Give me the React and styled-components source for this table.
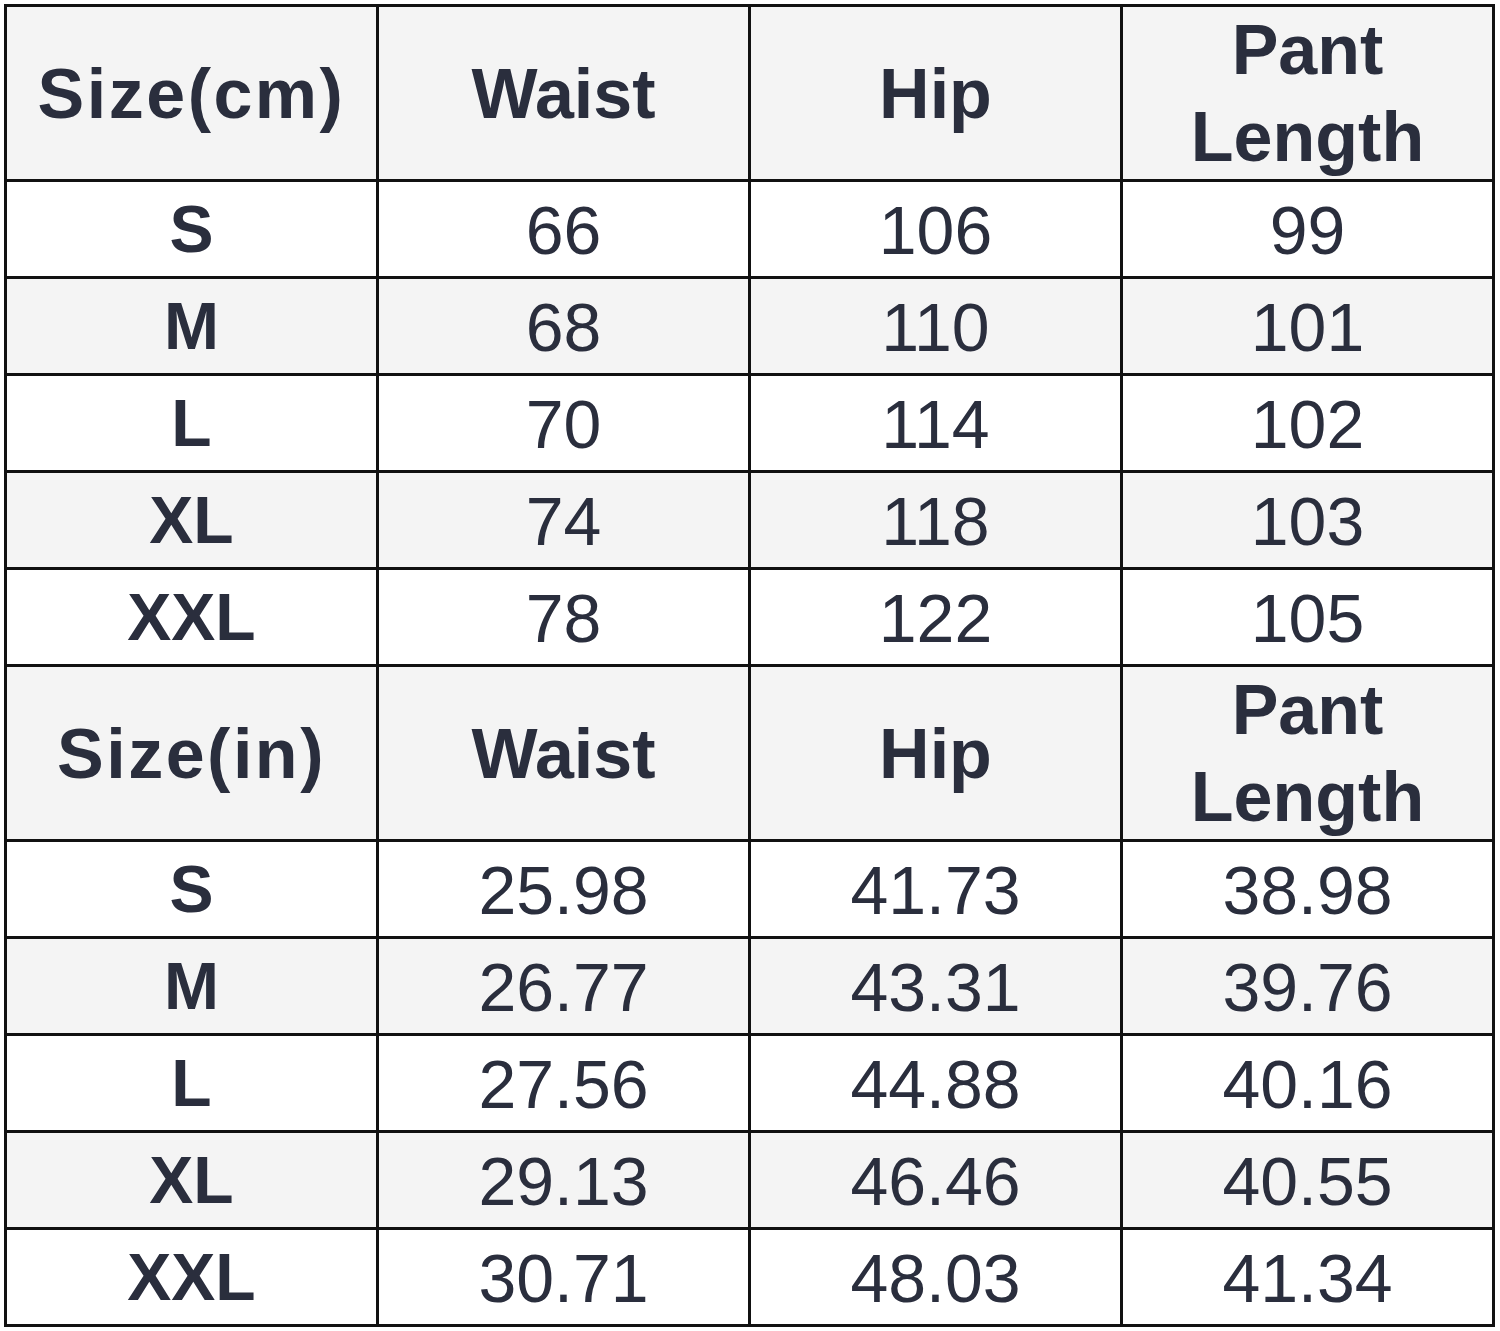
import React from "react";
import styled, { createGlobalStyle } from "styled-components";

const Global = createGlobalStyle`
  html, body { margin: 0; padding: 0; background: #ffffff; }
  body { font-family: "Liberation Sans", Arial, sans-serif; }
`;

const Page = styled.div`
  padding: 4px 0 0 4px;
  width: 1500px;
  height: 1331px;
  box-sizing: border-box;
  background: #fff;
`;

const Grid = styled.div`
  display: grid;
  grid-template-columns: repeat(4, 372px);
  border-top: 3px solid #111;
  border-left: 3px solid #111;
  width: max-content;
`;

const Cell = styled.div`
  box-sizing: border-box;
  height: ${(p) => (p.$head ? 175 : 97)}px;
  border-right: 3px solid #111;
  border-bottom: 3px solid #111;
  background: ${(p) => (p.$shade ? "#f4f4f4" : "#ffffff")};
  color: #2a2e3d;
  display: flex;
  align-items: center;
  justify-content: center;
  text-align: center;
  font-family: "Liberation Sans", Arial, sans-serif;
  font-weight: ${(p) => (p.$bold ? 700 : 400)};
  font-size: ${(p) => (p.$head ? 70 : p.$bold ? 66 : 68)}px;
  letter-spacing: ${(p) => (p.$wide ? "2.5px" : "0")};
  line-height: 1.24;
  padding-top: 2px;
`;

const Text = styled.span`
  display: inline-block;
`;

const tables = [
  {
    unit: "Size(cm)",
    rows: [
      ["S", "66", "106", "99"],
      ["M", "68", "110", "101"],
      ["L", "70", "114", "102"],
      ["XL", "74", "118", "103"],
      ["XXL", "78", "122", "105"],
    ],
  },
  {
    unit: "Size(in)",
    rows: [
      ["S", "25.98", "41.73", "38.98"],
      ["M", "26.77", "43.31", "39.76"],
      ["L", "27.56", "44.88", "40.16"],
      ["XL", "29.13", "46.46", "40.55"],
      ["XXL", "30.71", "48.03", "41.34"],
    ],
  },
];

export default function App() {
  return (
    <>
      <Global />
      <Page>
        <Grid>
          {tables.map((t) => (
            <React.Fragment key={t.unit}>
              <Cell $head $bold $shade $wide><Text>{t.unit}</Text></Cell>
              <Cell $head $bold $shade><Text>Waist</Text></Cell>
              <Cell $head $bold $shade><Text>Hip</Text></Cell>
              <Cell $head $bold $shade><Text>Pant<br />Length</Text></Cell>
              {t.rows.map((r, i) =>
                r.map((v, j) => (
                  <Cell key={t.unit + i + j} $bold={j === 0} $shade={i % 2 === 1}>
                    <Text>{v}</Text>
                  </Cell>
                ))
              )}
            </React.Fragment>
          ))}
        </Grid>
      </Page>
    </>
  );
}
